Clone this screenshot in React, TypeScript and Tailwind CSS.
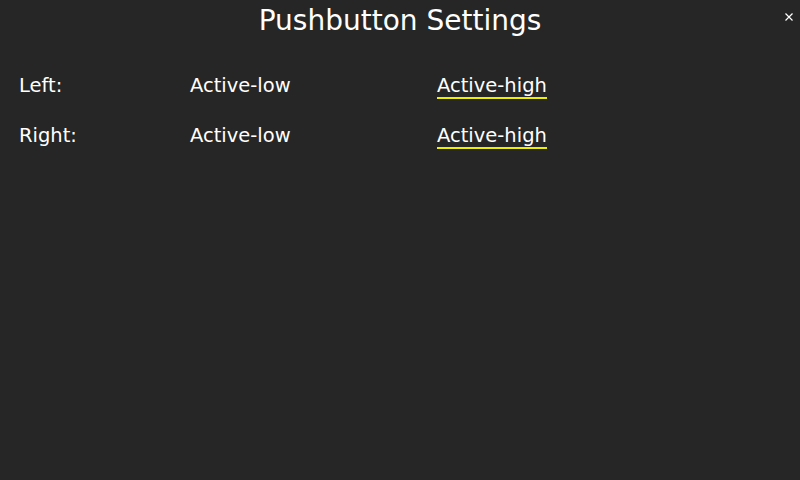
import React from 'react'

const rows = [
  { label: 'Left:', selected: 'high' },
  { label: 'Right:', selected: 'high' },
]

function Option({ text, active }: { text: string; active: boolean }) {
  return (
    <span
      className={`inline-block leading-[23px] border-b-2 ${active ? 'border-[#eeee00]' : 'border-transparent'}`}
    >
      {text}
    </span>
  )
}

export default function App() {
  return (
    <div
      className="relative w-[800px] h-[480px] bg-[#262626] text-white overflow-hidden"
      style={{ fontFamily: '"DejaVu Sans", sans-serif' }}
    >
      <h1 className="pt-[4px] text-center text-[28px] leading-[34px]">Pushbutton Settings</h1>

      <button className="absolute right-[7px] top-[13px] w-[8px] h-[8px]">
        <svg viewBox="0 0 8 8" width="8" height="8" className="block">
          <path d="M0.5 0.5 L7.5 7.5 M7.5 0.5 L0.5 7.5" stroke="#ffffff" strokeWidth="1.2" />
        </svg>
      </button>

      <div className="mt-[36px] pl-[19px] flex flex-col gap-[25px] text-[19.5px]">
        {rows.map((r) => (
          <div key={r.label} className="grid grid-cols-[171px_247px_auto] items-start leading-[23px]">
            <span>{r.label}</span>
            <div>
              <Option text="Active-low" active={r.selected === 'low'} />
            </div>
            <div>
              <Option text="Active-high" active={r.selected === 'high'} />
            </div>
          </div>
        ))}
      </div>
    </div>
  )
}
